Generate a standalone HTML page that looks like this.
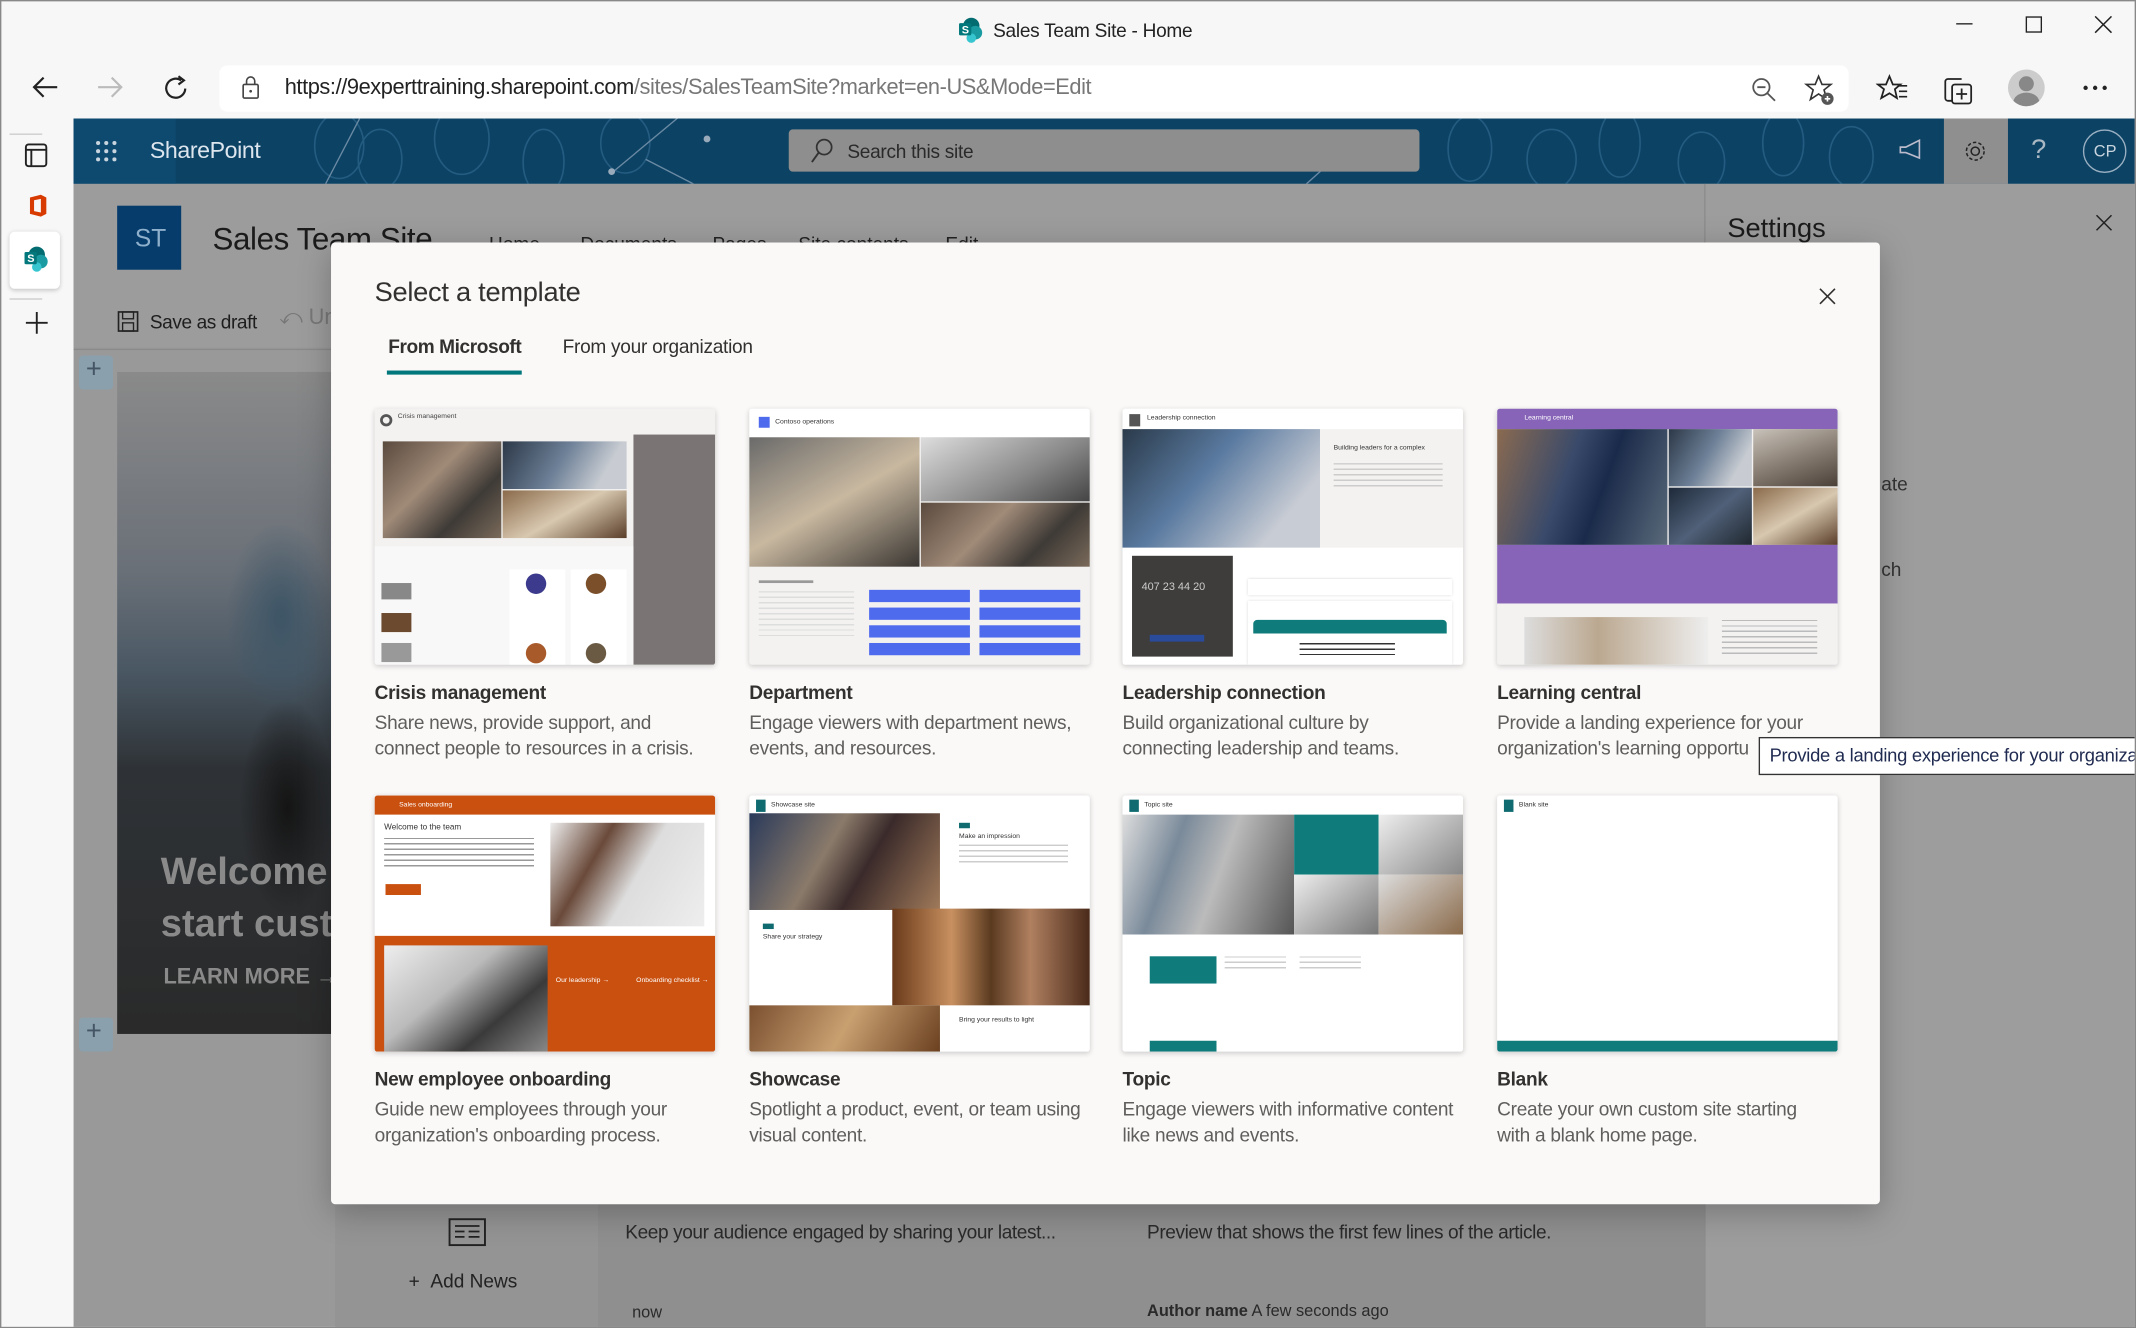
<!DOCTYPE html>
<html><head><meta charset="utf-8">
<style>
*{margin:0;padding:0;box-sizing:border-box}
html,body{width:2136px;height:1328px;overflow:hidden;background:#f7f7f7}
#s{position:absolute;left:0;top:0;width:1568px;height:975px;transform:scale(1.36225);transform-origin:0 0;font-family:"Liberation Sans",sans-serif;color:#323130;overflow:hidden;background:#f7f7f7;border:1px solid #888}
.a{position:absolute}
.t{position:absolute;white-space:nowrap}
.card{position:absolute;width:250px}
.th{position:absolute;left:0;top:0;width:250px;height:188px;background:#fff;overflow:hidden;box-shadow:0 1px 4px rgba(0,0,0,.18);border-radius:2px}
.ct{position:absolute;left:0;top:200px;font-size:14px;font-weight:bold;color:#323130;white-space:nowrap;letter-spacing:-0.2px}
.cd{position:absolute;left:0;top:221px;font-size:14px;line-height:19px;color:#605e5c;width:242px;letter-spacing:-0.2px}
.ph1{background:linear-gradient(135deg,#5a4a3e,#a08a78 40%,#3e3a36 70%,#7a6a5a)}
.ph2{background:linear-gradient(160deg,#c8c2ba,#8a7f74 50%,#4a4038)}
.ph3{background:linear-gradient(120deg,#2c3848,#6c7f96 45%,#c8ccd2 80%)}
.ph4{background:linear-gradient(150deg,#8a6a4a,#d8c8b0 50%,#5a3e2a)}
.ph5{background:linear-gradient(140deg,#1e2a3a,#506078 50%,#202830)}
.ln{position:absolute;height:2px;background:#c8c6c4}
</style></head><body><div id="s">

<!-- title bar -->
<svg class="a" style="left:701px;top:11px" width="20" height="20" viewBox="0 0 20 20"><circle cx="11" cy="7" r="6" fill="#036c70"/><circle cx="14" cy="12" r="5" fill="#1a9ba1"/><circle cx="11" cy="16" r="3.5" fill="#37c6d0"/><rect x="2" y="5" width="9" height="9" rx="1" fill="#03787c"/><text x="4" y="12.5" font-size="8" fill="#fff" font-family="Liberation Sans" font-weight="bold">S</text></svg>
<div class="t" style="left:728px;top:13px;font-size:14px;color:#222;letter-spacing:-0.2px">Sales Team Site - Home</div>
<div class="a" style="left:1435px;top:16px;width:12px;height:1px;background:#222"></div>
<div class="a" style="left:1486px;top:11px;width:12px;height:12px;border:1px solid #222"></div>
<svg class="a" style="left:1536px;top:10px" width="14" height="14"><path d="M1 1L13 13M13 1L1 13" stroke="#222" stroke-width="1.1"/></svg>

<!-- address row -->
<svg class="a" style="left:21px;top:53px" width="22" height="20"><path d="M20 10H3M10 3L3 10L10 17" stroke="#222" stroke-width="1.6" fill="none"/></svg>
<svg class="a" style="left:69px;top:53px" width="22" height="20"><path d="M2 10H19M12 3L19 10L12 17" stroke="#bbb" stroke-width="1.6" fill="none"/></svg>
<svg class="a" style="left:118px;top:53px" width="22" height="22"><path d="M17 11A7 7 0 1 1 14 5" stroke="#222" stroke-width="1.6" fill="none"/><path d="M12 2L16 5L12 8" stroke="#222" stroke-width="1.6" fill="none"/></svg>
<div class="a" style="left:160px;top:47px;width:1196px;height:34px;background:#fff;border-radius:6px"></div>
<svg class="a" style="left:176px;top:54px" width="14" height="18"><rect x="1.5" y="7" width="11" height="10" rx="1" stroke="#444" fill="none" stroke-width="1.2"/><path d="M4 7V4.5A3 3 0 0 1 10 4.5V7" stroke="#444" fill="none" stroke-width="1.2"/><circle cx="7" cy="12" r="1" fill="#444"/></svg>
<div class="t" style="left:208px;top:55px;font-size:16px;color:#777;letter-spacing:-0.3px"><span style="color:#222">https://9experttraining.sharepoint.com</span>/sites/SalesTeamSite?market=en-US&amp;Mode=Edit</div>
<svg class="a" style="left:1284px;top:55px" width="20" height="20"><circle cx="8" cy="8" r="6" stroke="#555" fill="none" stroke-width="1.3"/><path d="M5 8H11M12.5 12.5L18 18" stroke="#555" stroke-width="1.3"/></svg>
<svg class="a" style="left:1323px;top:53px" width="24" height="24"><path d="M11 2L13.5 8H20L15 12L17 19L11 15L5 19L7 12L2 8H8.5Z" stroke="#333" fill="none" stroke-width="1.2"/><circle cx="17.5" cy="18.5" r="4.5" fill="#555"/><path d="M15.5 18.5H19.5M17.5 16.5V20.5" stroke="#fff" stroke-width="1.2"/></svg>
<svg class="a" style="left:1376px;top:53px" width="24" height="22"><path d="M10 2L12.5 8H18L14 11.5L15.5 18L10 14.5L4 18L6 11.5L1.5 8H7.5Z" stroke="#222" fill="none" stroke-width="1.3"/><path d="M16 9H23M17 13H23M17 17H23" stroke="#222" stroke-width="1.2"/></svg>
<svg class="a" style="left:1425px;top:53px" width="24" height="24"><path d="M7 20H4A2 2 0 0 1 2 18V6A2 2 0 0 1 4 4H14" stroke="#222" fill="none" stroke-width="1.3"/><rect x="7" y="8" width="14" height="14" rx="2" stroke="#222" fill="none" stroke-width="1.3"/><path d="M10 15H18M14 11V19" stroke="#222" stroke-width="1.3"/></svg>
<div class="a" style="left:1473px;top:50px;width:27px;height:27px;border-radius:50%;background:#ccc;overflow:hidden"><div class="a" style="left:8px;top:5px;width:11px;height:11px;border-radius:50%;background:#888"></div><div class="a" style="left:4px;top:17px;width:19px;height:14px;border-radius:50%;background:#888"></div></div>
<svg class="a" style="left:1528px;top:61px" width="18" height="5"><circle cx="2" cy="2.5" r="1.6" fill="#222"/><circle cx="9" cy="2.5" r="1.6" fill="#222"/><circle cx="16" cy="2.5" r="1.6" fill="#222"/></svg>

<!-- left sidebar -->
<div class="a" style="left:6px;top:97px;width:24px;height:1px;background:#ccc"></div>
<svg class="a" style="left:17px;top:103px" width="18" height="20"><rect x="1" y="2" width="15" height="16" rx="2" stroke="#222" fill="none" stroke-width="1.4"/><path d="M1 6H16M5 6V18" stroke="#222" stroke-width="1.4"/></svg>
<svg class="a" style="left:19px;top:141px" width="16" height="18"><path d="M2 3L10 1L14 3V15L10 17L2 15Z" fill="#d83b01"/><path d="M5 5L10 4V14L5 13Z" fill="#f7f7f7"/></svg>
<div class="a" style="left:6px;top:169px;width:37px;height:42px;background:#fff;border-radius:4px;box-shadow:0 1px 3px rgba(0,0,0,.2)"></div>
<svg class="a" style="left:15px;top:179px" width="20" height="20"><circle cx="11" cy="7" r="6" fill="#036c70"/><circle cx="14" cy="12" r="5" fill="#1a9ba1"/><circle cx="11" cy="16" r="3.5" fill="#37c6d0"/><rect x="2" y="5" width="9" height="9" rx="1" fill="#03787c"/><text x="4" y="12.5" font-size="8" fill="#fff" font-weight="bold" font-family="Liberation Sans">S</text></svg>
<div class="a" style="left:6px;top:218px;width:24px;height:1px;background:#ccc"></div>
<svg class="a" style="left:17px;top:227px" width="18" height="18"><path d="M9 1V17M1 9H17" stroke="#222" stroke-width="1.4"/></svg>

<!-- SharePoint header -->
<div class="a" style="left:53px;top:86px;width:1515px;height:48px;background:#0c4264;overflow:hidden">
  <div class="a" style="left:0;top:0;width:75px;height:48px;background:#0e4a70"></div>
  <svg class="a" style="left:75px;top:0" width="1440" height="48"><g stroke="#2a6388" fill="none" stroke-width="1.2" opacity=".8"><ellipse cx="120" cy="20" rx="18" ry="24"/><ellipse cx="150" cy="30" rx="16" ry="22"/><ellipse cx="210" cy="15" rx="20" ry="26"/><ellipse cx="270" cy="32" rx="15" ry="24"/><ellipse cx="330" cy="18" rx="18" ry="22"/><ellipse cx="950" cy="22" rx="16" ry="24"/><ellipse cx="1010" cy="30" rx="18" ry="22"/><ellipse cx="1060" cy="18" rx="15" ry="25"/><ellipse cx="1120" cy="32" rx="17" ry="22"/><ellipse cx="1180" cy="18" rx="15" ry="24"/><ellipse cx="1230" cy="28" rx="16" ry="22"/></g><g stroke="#6a8aa4" stroke-width="1"><path d="M110 48L135 0M320 40L380 -10M345 30L380 48M830 48L850 30"/></g><circle cx="320" cy="39" r="2.5" fill="#9ab"/><circle cx="390" cy="15" r="2.5" fill="#9ab"/></svg>
</div>
<svg class="a" style="left:69px;top:102px" width="16" height="16"><g fill="#c8d4de"><circle cx="2" cy="2" r="1.5"/><circle cx="8" cy="2" r="1.5"/><circle cx="14" cy="2" r="1.5"/><circle cx="2" cy="8" r="1.5"/><circle cx="8" cy="8" r="1.5"/><circle cx="14" cy="8" r="1.5"/><circle cx="2" cy="14" r="1.5"/><circle cx="8" cy="14" r="1.5"/><circle cx="14" cy="14" r="1.5"/></g></svg>
<div class="t" style="left:109px;top:100px;font-size:17px;color:#dde6ee;letter-spacing:-0.3px">SharePoint</div>
<div class="a" style="left:578px;top:94px;width:463px;height:31px;background:#8e8e8e;border-radius:3px"></div>
<svg class="a" style="left:593px;top:100px" width="18" height="20"><circle cx="11" cy="7" r="5.5" stroke="#333" fill="none" stroke-width="1.3"/><path d="M7 11L2 18" stroke="#333" stroke-width="1.4"/></svg>
<div class="t" style="left:621px;top:102px;font-size:14px;color:#2a2a2a;letter-spacing:-0.2px">Search this site</div>
<svg class="a" style="left:1392px;top:101px" width="20" height="16"><path d="M2 6H6L16 1V14L6 10H2Z" stroke="#bbc" fill="none" stroke-width="1.2"/></svg>
<div class="a" style="left:1426px;top:86px;width:47px;height:48px;background:#8f8f8f"></div>
<svg class="a" style="left:1439px;top:100px" width="20" height="20"><circle cx="10" cy="10" r="3" stroke="#222" fill="none" stroke-width="1.1"/><circle cx="10" cy="10" r="6.5" stroke="#222" fill="none" stroke-width="1.1" stroke-dasharray="2.5 1.6"/></svg>
<div class="t" style="left:1490px;top:98px;font-size:20px;color:#aab8c4">?</div>
<div class="a" style="left:1528px;top:94px;width:32px;height:32px;border-radius:50%;border:1px solid #9ab0c2"></div>
<div class="t" style="left:1536px;top:103px;font-size:12px;color:#c8d4de">CP</div>

<!-- dimmed page -->
<div class="a" style="left:53px;top:134px;width:1515px;height:841px;background:#999"></div>
<div class="a" style="left:53px;top:134px;width:1197px;height:120px;background:#9c9c9c"></div>
<div class="a" style="left:85px;top:150px;width:47px;height:47px;background:#053c6b"></div>
<div class="t" style="left:98px;top:164px;font-size:18px;color:#8fb0cc">ST</div>
<div class="t" style="left:155px;top:161px;font-size:23px;color:#1b1b1b;letter-spacing:-0.3px">Sales Team Site</div>
<div class="t" style="left:358px;top:170px;font-size:14px;color:#222">Home</div>
<div class="t" style="left:425px;top:170px;font-size:14px;color:#222">Documents</div>
<div class="t" style="left:522px;top:170px;font-size:14px;color:#222">Pages</div>
<div class="t" style="left:585px;top:170px;font-size:14px;color:#222">Site contents</div>
<div class="t" style="left:693px;top:170px;font-size:14px;color:#222">Edit</div>
<div class="a" style="left:53px;top:255px;width:1197px;height:1px;background:#8a8a8a"></div>
<svg class="a" style="left:85px;top:227px" width="16" height="16"><rect x="1" y="1" width="14" height="14" stroke="#222" fill="none" stroke-width="1.2"/><rect x="4" y="1" width="8" height="5" stroke="#222" fill="none"/><rect x="4" y="9" width="8" height="6" stroke="#222" fill="none"/></svg>
<div class="t" style="left:109px;top:227px;font-size:14px;color:#1e1e1e;letter-spacing:-0.3px">Save as draft</div>
<div class="t" style="left:204px;top:224px;font-size:16px;color:#777">⤺ Un</div>
<div class="a" style="left:57px;top:260px;width:25px;height:25px;background:#8aa0ac;border-radius:3px"></div>
<div class="t" style="left:62px;top:259px;font-size:20px;color:#456">+</div>
<div class="a" style="left:57px;top:746px;width:25px;height:25px;background:#8aa0ac;border-radius:3px"></div>
<div class="t" style="left:62px;top:745px;font-size:20px;color:#456">+</div>
<div class="a" style="left:85px;top:272px;width:160px;height:486px;background:linear-gradient(180deg,#8a8a8a 0%,#6a7078 30%,#4a5864 45%,#2e3236 60%,#2a2a2a 100%)"></div>
<div class="a" style="left:85px;top:272px;width:160px;height:486px;background:radial-gradient(ellipse 40px 70px at 120px 180px,#3d5566,transparent),radial-gradient(ellipse 35px 80px at 125px 320px,#141414,transparent)"></div>
<div class="t" style="left:117px;top:620px;font-size:28px;font-weight:bold;color:#8a8a8a;line-height:38px">Welcome!<br>start custo</div>
<div class="t" style="left:119px;top:708px;font-size:16px;font-weight:bold;color:#8a8a8a">LEARN MORE →</div>
<div class="a" style="left:1250px;top:134px;width:318px;height:841px;background:#9d9d9d;border-left:1px solid #8c8c8c"></div>
<div class="t" style="left:1267px;top:156px;font-size:20px;color:#1b1b1b">Settings</div>
<svg class="a" style="left:1537px;top:156px" width="13" height="13"><path d="M1 1L12 12M12 1L1 12" stroke="#222" stroke-width="1.1"/></svg>
<div class="t" style="left:1380px;top:346px;font-size:14px;color:#333">ate</div>
<div class="t" style="left:1380px;top:409px;font-size:14px;color:#333">ch</div>
<div class="a" style="left:245px;top:883px;width:193px;height:92px;background:#949494"></div>
<div class="a" style="left:438px;top:883px;width:812px;height:92px;background:#8f8f8f"></div>
<svg class="a" style="left:328px;top:893px" width="28" height="22"><rect x="1" y="1" width="26" height="19" stroke="#222" fill="none" stroke-width="1.4"/><path d="M5 6H23M5 10H12M5 14H12M15 10H23M15 14H23" stroke="#222" stroke-width="1.3"/></svg>
<div class="t" style="left:299px;top:931px;font-size:14px;color:#222">+ &#160;Add News</div>
<div class="t" style="left:458px;top:895px;font-size:14px;color:#2a2a2a;letter-spacing:-0.3px">Keep your audience engaged by sharing your latest...</div>
<div class="t" style="left:841px;top:895px;font-size:14px;color:#2a2a2a;letter-spacing:-0.3px">Preview that shows the first few lines of the article.</div>
<div class="t" style="left:463px;top:955px;font-size:12px;color:#2a2a2a">now</div>
<div class="t" style="left:841px;top:954px;font-size:12px;color:#2a2a2a"><b>Author name</b> A few seconds ago</div>

<!-- modal -->
<div class="a" style="left:242px;top:177px;width:1137px;height:706px;background:#faf9f8;border-radius:3px;box-shadow:0 6px 24px rgba(0,0,0,.25)">
<div class="t" style="left:32px;top:26px;font-size:20px;color:#323130;letter-spacing:-0.2px">Select a template</div>
<svg class="a" style="left:1092px;top:33px" width="13" height="13"><path d="M1 1L12 12M12 1L1 12" stroke="#323130" stroke-width="1.2"/></svg>
<div class="t" style="left:42px;top:68px;font-size:14px;font-weight:bold;color:#323130;letter-spacing:-0.3px">From Microsoft</div>
<div class="a" style="left:41px;top:94px;width:99px;height:3px;background:#03787c"></div>
<div class="t" style="left:170px;top:68px;font-size:14px;color:#323130;letter-spacing:-0.2px">From your organization</div>

<!-- row1 -->
<div class="card" style="left:32px;top:122px">
 <div class="th" style="background:#f3f2f1">
  <div class="a" style="left:4px;top:4px;width:9px;height:9px;border-radius:50%;border:2px solid #555"></div>
  <div class="t" style="left:17px;top:3px;font-size:5px;color:#444">Crisis management</div>
  <div class="a ph1" style="left:6px;top:24px;width:87px;height:71px"></div>
  <div class="a ph3" style="left:94px;top:24px;width:91px;height:35px"></div>
  <div class="a ph4" style="left:94px;top:60px;width:91px;height:35px"></div>
  <div class="a" style="left:190px;top:19px;width:60px;height:169px;background:#7a7574"></div>
  <div class="a" style="left:0;top:101px;width:190px;height:87px;background:#f8f8f8"></div>
  <div class="a" style="left:5px;top:128px;width:22px;height:12px;background:#888"></div>
  <div class="a" style="left:5px;top:150px;width:22px;height:14px;background:#6b4a30"></div>
  <div class="a" style="left:5px;top:172px;width:22px;height:14px;background:#999"></div>
  <div class="a" style="left:99px;top:118px;width:41px;height:70px;background:#fff"></div>
  <div class="a" style="left:144px;top:118px;width:41px;height:70px;background:#fff"></div>
  <div class="a" style="left:111px;top:121px;width:15px;height:15px;border-radius:50%;background:#3b3a8c"></div>
  <div class="a" style="left:155px;top:121px;width:15px;height:15px;border-radius:50%;background:#7a4f2a"></div>
  <div class="a" style="left:111px;top:172px;width:15px;height:15px;border-radius:50%;background:#a85a2a"></div>
  <div class="a" style="left:155px;top:172px;width:15px;height:15px;border-radius:50%;background:#6a5a44"></div>
 </div>
 <div class="ct">Crisis management</div>
 <div class="cd">Share news, provide support, and connect people to resources in a crisis.</div>
</div>
<div class="card" style="left:307px;top:122px">
 <div class="th" style="background:#f3f2f1">
  <div class="a" style="left:0;top:0;width:250px;height:21px;background:#fff"></div>
  <div class="a" style="left:7px;top:6px;width:8px;height:8px;background:#4f6bed"></div>
  <div class="t" style="left:19px;top:7px;font-size:5px;color:#333">Contoso operations</div>
  <div class="a ph2" style="left:0;top:21px;width:125px;height:95px;background:linear-gradient(150deg,#6a6a6a,#c8b8a0 50%,#3a3632)"></div>
  <div class="a ph3" style="left:126px;top:21px;width:124px;height:47px;background:linear-gradient(150deg,#ddd,#888 60%,#444)"></div>
  <div class="a ph1" style="left:126px;top:69px;width:124px;height:47px"></div>
  <div class="ln" style="left:7px;top:126px;width:40px;height:2px;background:#999"></div>
  <div class="a" style="left:7px;top:134px;width:70px;height:35px;background:repeating-linear-gradient(#ddd 0 1px,transparent 1px 4px)"></div>
  <div class="a" style="left:88px;top:133px;width:74px;height:9px;background:#4f6bed"></div>
  <div class="a" style="left:88px;top:146px;width:74px;height:9px;background:#4f6bed"></div>
  <div class="a" style="left:88px;top:159px;width:74px;height:9px;background:#4f6bed"></div>
  <div class="a" style="left:88px;top:172px;width:74px;height:9px;background:#4f6bed"></div>
  <div class="a" style="left:169px;top:133px;width:74px;height:9px;background:#4f6bed"></div>
  <div class="a" style="left:169px;top:146px;width:74px;height:9px;background:#4f6bed"></div>
  <div class="a" style="left:169px;top:159px;width:74px;height:9px;background:#4f6bed"></div>
  <div class="a" style="left:169px;top:172px;width:74px;height:9px;background:#4f6bed"></div>
 </div>
 <div class="ct">Department</div>
 <div class="cd">Engage viewers with department news, events, and resources.</div>
</div>
<div class="card" style="left:581px;top:122px">
 <div class="th">
  <div class="a" style="left:5px;top:4px;width:8px;height:9px;background:#555"></div>
  <div class="t" style="left:18px;top:4px;font-size:5px;color:#333">Leadership connection</div>
  <div class="a ph5" style="left:0;top:15px;width:145px;height:87px;background:linear-gradient(130deg,#2a3a4a,#5a7aa0 40%,#c8ccd4 80%)"></div>
  <div class="a" style="left:145px;top:15px;width:105px;height:87px;background:#f3f2f1"></div>
  <div class="t" style="left:155px;top:26px;font-size:5px;color:#333">Building leaders for a complex</div>
  <div class="a" style="left:155px;top:40px;width:80px;height:18px;background:repeating-linear-gradient(#ccc 0 1px,transparent 1px 4px)"></div>
  <div class="a" style="left:7px;top:108px;width:74px;height:74px;background:#3e3d3b"></div>
  <div class="t" style="left:14px;top:126px;font-size:8px;color:#ccc">407 23 44 20</div>
  <div class="a" style="left:20px;top:166px;width:40px;height:5px;background:#2a4a9a"></div>
  <div class="a" style="left:92px;top:125px;width:150px;height:12px;background:#fff;box-shadow:0 0 2px #ccc"></div>
  <div class="a" style="left:92px;top:141px;width:150px;height:47px;background:#fff;box-shadow:0 0 2px #ccc"></div>
  <div class="a" style="left:96px;top:155px;width:142px;height:10px;background:#0f7b7b;border-radius:3px 3px 0 0"></div>
  <div class="a" style="left:130px;top:172px;width:70px;height:12px;background:repeating-linear-gradient(#333 0 1px,transparent 1px 4px)"></div>
 </div>
 <div class="ct">Leadership connection</div>
 <div class="cd">Build organizational culture by connecting leadership and teams.</div>
</div>
<div class="card" style="left:856px;top:122px">
 <div class="th" style="background:#f3f2f1">
  <div class="a" style="left:0;top:0;width:250px;height:15px;background:#8764b8"></div>
  <div class="t" style="left:20px;top:4px;font-size:5px;color:#fff">Learning central</div>
  <div class="a" style="left:0;top:15px;width:125px;height:85px;background:linear-gradient(110deg,#8a6a50,#3a4a6a 40%,#1a2a4a 60%,#5a6a7a)"></div>
  <div class="a ph3" style="left:126px;top:15px;width:61px;height:42px"></div>
  <div class="a ph2" style="left:188px;top:15px;width:62px;height:42px"></div>
  <div class="a ph5" style="left:126px;top:58px;width:61px;height:42px"></div>
  <div class="a ph4" style="left:188px;top:58px;width:62px;height:42px"></div>
  <div class="a" style="left:0;top:100px;width:250px;height:43px;background:#8764b8"></div>
  <div class="a" style="left:20px;top:153px;width:135px;height:35px;background:linear-gradient(90deg,#ddd,#bba890 40%,#eee)"></div>
  <div class="a" style="left:165px;top:155px;width:70px;height:28px;background:repeating-linear-gradient(#bbb 0 1px,transparent 1px 4px)"></div>
 </div>
 <div class="ct">Learning central</div>
 <div class="cd">Provide a landing experience for your organization's learning opportu</div>
</div>

<!-- row2 -->
<div class="card" style="left:32px;top:406px">
 <div class="th">
  <div class="a" style="left:0;top:0;width:250px;height:14px;background:#ca5010"></div>
  <div class="t" style="left:18px;top:4px;font-size:5px;color:#fff">Sales onboarding</div>
  <div class="t" style="left:7px;top:21px;font-size:6px;color:#333">Welcome to the team</div>
  <div class="a" style="left:7px;top:31px;width:110px;height:22px;background:repeating-linear-gradient(#999 0 1px,transparent 1px 4px)"></div>
  <div class="a" style="left:8px;top:65px;width:26px;height:8px;background:#ca5010"></div>
  <div class="a" style="left:129px;top:20px;width:113px;height:76px;background:linear-gradient(120deg,#eee,#6a4a3a 30%,#ddd 55%,#eee)"></div>
  <div class="a" style="left:0;top:103px;width:250px;height:85px;background:#ca5010"></div>
  <div class="a" style="left:7px;top:110px;width:120px;height:78px;background:linear-gradient(140deg,#eee,#bbb 40%,#3a3a3a 70%,#888)"></div>
  <div class="t" style="left:133px;top:133px;font-size:5px;color:#fff">Our leadership →</div>
  <div class="t" style="left:192px;top:133px;font-size:5px;color:#fff">Onboarding checklist →</div>
 </div>
 <div class="ct">New employee onboarding</div>
 <div class="cd">Guide new employees through your organization's onboarding process.</div>
</div>
<div class="card" style="left:307px;top:406px">
 <div class="th">
  <div class="a" style="left:5px;top:3px;width:7px;height:9px;background:#0f6b6f"></div>
  <div class="t" style="left:16px;top:4px;font-size:5px;color:#333">Showcase site</div>
  <div class="a" style="left:0;top:13px;width:140px;height:71px;background:linear-gradient(120deg,#2a3a5a,#8a7a6a 40%,#3a2a2a 60%,#a07a5a)"></div>
  <div class="a" style="left:154px;top:20px;width:8px;height:4px;background:#0f6b6f"></div>
  <div class="t" style="left:154px;top:27px;font-size:5px;color:#333">Make an impression</div>
  <div class="a" style="left:154px;top:36px;width:80px;height:16px;background:repeating-linear-gradient(#ccc 0 1px,transparent 1px 4px)"></div>
  <div class="a" style="left:105px;top:83px;width:145px;height:71px;background:linear-gradient(90deg,#6a3a1a,#c89060 30%,#5a3a20 50%,#b08060 70%,#4a2a1a)"></div>
  <div class="a" style="left:10px;top:94px;width:8px;height:4px;background:#0f6b6f"></div>
  <div class="t" style="left:10px;top:101px;font-size:5px;color:#333">Share your strategy</div>
  <div class="a" style="left:0;top:154px;width:140px;height:34px;background:linear-gradient(120deg,#7a5030,#c8a070 50%,#6a4020)"></div>
  <div class="t" style="left:154px;top:162px;font-size:5px;color:#333">Bring your results to light</div>
 </div>
 <div class="ct">Showcase</div>
 <div class="cd" style="width:262px">Spotlight a product, event, or team using visual content.</div>
</div>
<div class="card" style="left:581px;top:406px">
 <div class="th">
  <div class="a" style="left:5px;top:3px;width:7px;height:9px;background:#0f6b6f"></div>
  <div class="t" style="left:16px;top:4px;font-size:5px;color:#333">Topic site</div>
  <div class="a" style="left:0;top:14px;width:126px;height:88px;background:linear-gradient(110deg,#ddd,#7a8a9a 30%,#bbb 55%,#555)"></div>
  <div class="a" style="left:126px;top:14px;width:62px;height:44px;background:#0f7b7b"></div>
  <div class="a" style="left:188px;top:14px;width:62px;height:44px;background:linear-gradient(140deg,#eee,#888)"></div>
  <div class="a" style="left:126px;top:58px;width:62px;height:44px;background:linear-gradient(140deg,#eee,#777)"></div>
  <div class="a" style="left:188px;top:58px;width:62px;height:44px;background:linear-gradient(140deg,#ddd,#8a6a4a)"></div>
  <div class="a" style="left:20px;top:118px;width:49px;height:20px;background:#0f7b7b"></div>
  <div class="a" style="left:75px;top:118px;width:45px;height:10px;background:repeating-linear-gradient(#ccc 0 1px,transparent 1px 4px)"></div>
  <div class="a" style="left:130px;top:118px;width:45px;height:10px;background:repeating-linear-gradient(#ccc 0 1px,transparent 1px 4px)"></div>
  <div class="a" style="left:20px;top:180px;width:49px;height:8px;background:#0f7b7b"></div>
 </div>
 <div class="ct">Topic</div>
 <div class="cd" style="width:262px">Engage viewers with informative content like news and events.</div>
</div>
<div class="card" style="left:856px;top:406px">
 <div class="th">
  <div class="a" style="left:5px;top:3px;width:7px;height:9px;background:#0f6b6f"></div>
  <div class="t" style="left:16px;top:4px;font-size:5px;color:#333">Blank site</div>
  <div class="a" style="left:0;top:180px;width:250px;height:8px;background:#0f7b7b"></div>
 </div>
 <div class="ct">Blank</div>
 <div class="cd">Create your own custom site starting with a blank home page.</div>
</div>
</div>

<!-- tooltip -->
<div class="a" style="left:1290px;top:540px;width:290px;height:28px;background:#fff;border:1px solid #333"></div>
<div class="t" style="left:1298px;top:546px;font-size:13.5px;color:#1f2a50;letter-spacing:-0.2px">Provide a landing experience for your organiza</div>

</div></body></html>
